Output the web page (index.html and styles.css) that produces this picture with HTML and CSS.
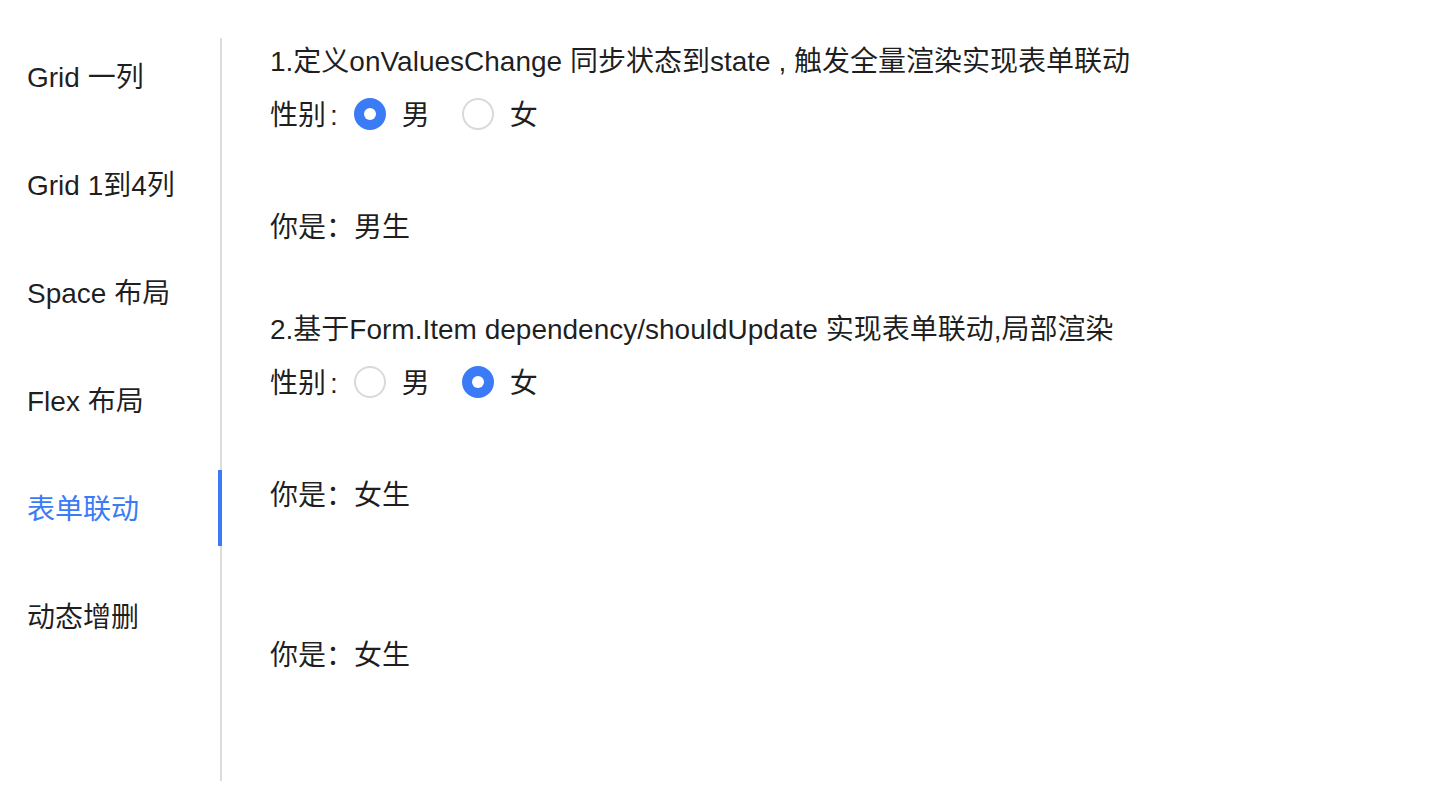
FILE: index.html
```html
<!DOCTYPE html>
<html lang="zh-CN">
<head>
<meta charset="utf-8">
<title>表单联动</title>
<link rel="stylesheet" href="styles.css">
</head>
<body>
<div class="page">
  <nav class="tabs-nav">
    <div class="tab">Grid 一列</div>
    <div class="tab">Grid 1到4列</div>
    <div class="tab">Space 布局</div>
    <div class="tab">Flex 布局</div>
    <div class="tab tab-active">表单联动</div>
    <div class="tab">动态增删</div>
  </nav>
  <main class="content">
    <div class="title">1.定义onValuesChange 同步状态到state , 触发全量渲染实现表单联动</div>
    <div class="form-item">
      <span class="label txt">性别<span class="colon">:</span></span>
      <label class="radio"><span class="radio-circle checked"></span><span class="radio-text txt">男</span></label>
      <label class="radio"><span class="radio-circle"></span><span class="radio-text txt">女</span></label>
    </div>
    <div class="form-item"><span class="txt">你是：男生</span></div>

    <div class="title">2.基于Form.Item dependency/shouldUpdate 实现表单联动,局部渲染</div>
    <div class="form-item">
      <span class="label txt">性别<span class="colon">:</span></span>
      <label class="radio"><span class="radio-circle"></span><span class="radio-text txt">男</span></label>
      <label class="radio"><span class="radio-circle checked"></span><span class="radio-text txt">女</span></label>
    </div>
    <div class="form-item"><span class="txt">你是：女生</span></div>
    <div class="form-item form-item-empty"></div>
    <div class="form-item"><span class="txt">你是：女生</span></div>
  </main>
</div>
</body>
</html>
```

FILE: styles.css
```css
html, body {
  margin: 0;
  padding: 0;
  background: #ffffff;
}

body {
  font-family: "Liberation Sans", "Noto Sans CJK SC", sans-serif;
  font-size: 28px;
  line-height: 44px;
  color: rgba(0, 0, 0, 0.88);
}

.page {
  display: flex;
  padding-top: 38px;
}

.tabs-nav {
  width: 222px;
  flex: none;
  display: flex;
  flex-direction: column;
  gap: 32px;
  border-right: 2px solid #dcdcdc;
  min-height: 743px;
  box-sizing: border-box;
}

.tab {
  padding: 18px 0 14px 27px;
  line-height: 44px;
  white-space: nowrap;
  position: relative;
}

.tab-active {
  color: #3b7bf6;
}

.tab-active::after {
  content: "";
  position: absolute;
  top: 0;
  bottom: 0;
  right: -2px;
  width: 4px;
  background: #3b7bf6;
}

.content {
  padding-left: 48px;
  display: flex;
  flex-direction: column;
}

.title {
  line-height: 44px;
  padding-top: 2px;
  margin-bottom: -2px;
  white-space: nowrap;
}

.form-item {
  display: flex;
  align-items: center;
  height: 64px;
  margin-bottom: 48px;
  white-space: nowrap;
}

.form-item-empty {
  height: 0;
}

.txt {
  padding-top: 4px;
}

.label {
  display: inline-flex;
}

.colon {
  margin: 0 16px 0 4px;
}

.radio {
  display: inline-flex;
  align-items: center;
  margin-right: 16px;
}

.radio-circle {
  width: 32px;
  height: 32px;
  box-sizing: border-box;
  border: 2px solid #d9d9d9;
  border-radius: 50%;
  background: #fff;
  position: relative;
  flex: none;
}

.radio-circle.checked {
  border-color: #3b7bf6;
  background: #3b7bf6;
}

.radio-circle.checked::after {
  content: "";
  position: absolute;
  left: 50%;
  top: 50%;
  width: 12px;
  height: 12px;
  margin: -6px 0 0 -6px;
  border-radius: 50%;
  background: #fff;
}

.radio-text {
  padding-left: 16px;
  padding-right: 16px;
}
```
